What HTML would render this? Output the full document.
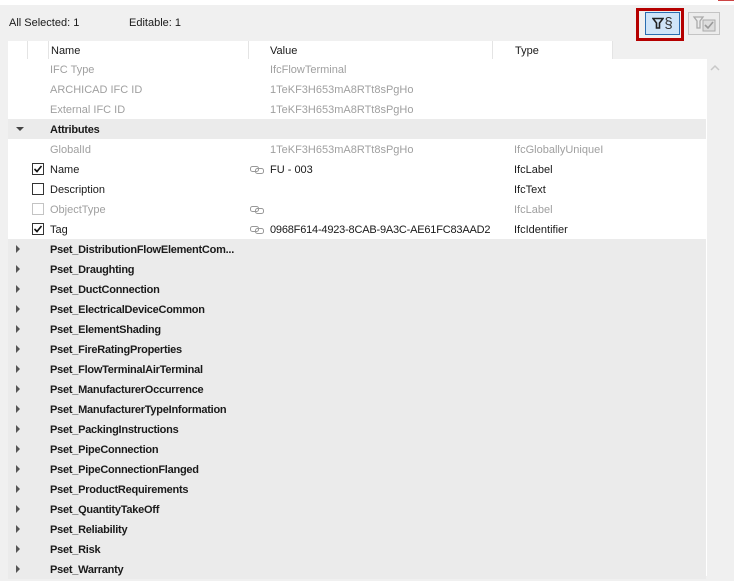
<!DOCTYPE html>
<html><head><style>
*{margin:0;padding:0;box-sizing:border-box}
body{width:734px;height:576px;background:#f0f0f0;font-family:"Liberation Sans",sans-serif;font-size:11px;color:#1a1a1a;position:relative;overflow:hidden}
.topw{position:absolute;left:0;top:0;width:734px;height:5px;background:#fff}
.red{position:absolute;left:718px;top:0;width:16px;height:1px;background:#c44}
.t{position:absolute;white-space:nowrap}
.hdr{position:absolute;left:8px;top:41px;width:604px;height:18px;background:#fff}
.sep{position:absolute;top:41px;width:1px;height:18px;background:#e4e4e4}
.body{position:absolute;left:8px;top:59px;width:698px;height:517px;background:#fff}
.row{position:absolute;left:8px;width:698px;height:20px;line-height:22px}
.g{background:#ebebeb}
.gray{color:#a0a0a0}
.b{font-weight:bold;letter-spacing:-0.25px}
.cb{position:absolute;left:32px;width:12px;height:12px;border:1px solid #333;background:#fff}
.cb.dis{border-color:#c4c4c4}
.tri{position:absolute;left:16px;width:0;height:0}
.right{border-top:4px solid transparent;border-bottom:4px solid transparent;border-left:4px solid #555}
.down{border-left:4px solid transparent;border-right:4px solid transparent;border-top:4px solid #444}
.vl{position:absolute;left:706px;top:59px;width:1px;height:517px;background:#fff}
</style></head><body>
<div class="topw"></div><div class="red"></div>
<div class="t" style="left:9px;top:17px">All Selected: 1</div>
<div class="t" style="left:129px;top:17px">Editable: 1</div>
<div style="position:absolute;left:636px;top:8px;width:48px;height:33px;border:3px solid #b50000"></div>
<div style="position:absolute;left:645px;top:12px;width:35px;height:23px;border:1px solid #2a6db0;background:#cfe4f8;font-size:15px;line-height:21px;text-align:center;color:#333">
<svg width="12" height="12" viewBox="0 0 12 12" style="vertical-align:-1px"><path d="M1 1.5H11L7.5 6V11H4.5V6Z" fill="none" stroke="#222" stroke-width="1.6"/></svg>§</div>
<div style="position:absolute;left:688px;top:12px;width:32px;height:23px;border:1px solid #c4c4c4;background:#ececec">
<svg width="30" height="21" viewBox="0 0 30 21"><path d="M5 4H14L11 8V15H8V8Z" fill="none" stroke="#aaa" stroke-width="1.3"/><rect x="14" y="7" width="12" height="11" fill="#ddd" stroke="#aaa"/><path d="M16 12L19 15L24 9" fill="none" stroke="#999" stroke-width="1.6"/></svg></div>
<div class="hdr"></div>
<div class="sep" style="left:27px"></div><div class="sep" style="left:48px"></div><div class="sep" style="left:248px"></div><div class="sep" style="left:492px"></div><div class="sep" style="left:612px"></div>
<div class="t" style="left:51px;top:45px">Name</div>
<div class="t" style="left:270px;top:45px">Value</div>
<div class="t" style="left:515px;top:45px">Type</div>
<div class="body"></div>
<div class="vl"></div>
<svg style="position:absolute;left:709px;top:64px" width="12" height="8"><path d="M2 6L6 2L10 6" fill="none" stroke="#c8c8c8" stroke-width="1.5"/></svg>

<div class="row gray" style="top:59px"><span class="t" style="left:42px">IFC Type</span><span class="t" style="left:262px">IfcFlowTerminal</span></div>
<div class="row gray" style="top:79px"><span class="t" style="left:42px">ARCHICAD IFC ID</span><span class="t" style="left:262px">1TeKF3H653mA8RTt8sPgHo</span></div>
<div class="row gray" style="top:99px"><span class="t" style="left:42px">External IFC ID</span><span class="t" style="left:262px">1TeKF3H653mA8RTt8sPgHo</span></div>
<div class="row g" style="top:119px"><span class="tri down" style="left:8px;top:8px"></span><span class="t b" style="left:42px">Attributes</span></div>
<div class="row gray" style="top:139px"><span class="t" style="left:42px">GlobalId</span><span class="t" style="left:262px">1TeKF3H653mA8RTt8sPgHo</span><span class="t" style="left:506px">IfcGloballyUniqueI</span></div>

<div class="cb" style="top:163px"><svg width="10" height="10" style="position:absolute;left:0;top:0"><path d="M1.5 5L4 7.5L8.5 2" fill="none" stroke="#111" stroke-width="1.6"/></svg></div>
<div class="t" style="left:50px;top:164px">Name</div>
<div class="t" style="left:270px;top:164px">FU - 003</div>
<div class="t" style="left:514px;top:164px">IfcLabel</div>
<div class="cb" style="top:183px"></div>
<div class="t" style="left:50px;top:184px">Description</div>
<div class="t" style="left:514px;top:184px">IfcText</div>
<div class="cb dis" style="top:203px"></div>
<div class="t gray" style="left:50px;top:204px">ObjectType</div>
<div class="t gray" style="left:514px;top:204px">IfcLabel</div>
<div class="cb" style="top:223px"><svg width="10" height="10" style="position:absolute;left:0;top:0"><path d="M1.5 5L4 7.5L8.5 2" fill="none" stroke="#111" stroke-width="1.6"/></svg></div>
<div class="t" style="left:50px;top:224px">Tag</div>
<div class="t" style="left:270px;top:224px;letter-spacing:-0.2px">0968F614-4923-8CAB-9A3C-AE61FC83AAD2</div>
<div class="t" style="left:514px;top:224px">IfcIdentifier</div>
<svg style="position:absolute;left:250px;top:166px" width="16" height="70"><g fill="none" stroke="#999" stroke-width="1"><g id="l"><rect x="0.5" y="0.5" width="8" height="5" rx="2"/><rect x="5.5" y="2.5" width="8" height="5" rx="2"/></g><use href="#l" y="40"/><use href="#l" y="60"/></g></svg>

<div class="row g" style="top:239px"><span class="tri right" style="left:8px;top:6px"></span><span class="t b" style="left:42px">Pset_DistributionFlowElementCom...</span></div>
<div class="row g" style="top:259px"><span class="tri right" style="left:8px;top:6px"></span><span class="t b" style="left:42px">Pset_Draughting</span></div>
<div class="row g" style="top:279px"><span class="tri right" style="left:8px;top:6px"></span><span class="t b" style="left:42px">Pset_DuctConnection</span></div>
<div class="row g" style="top:299px"><span class="tri right" style="left:8px;top:6px"></span><span class="t b" style="left:42px">Pset_ElectricalDeviceCommon</span></div>
<div class="row g" style="top:319px"><span class="tri right" style="left:8px;top:6px"></span><span class="t b" style="left:42px">Pset_ElementShading</span></div>
<div class="row g" style="top:339px"><span class="tri right" style="left:8px;top:6px"></span><span class="t b" style="left:42px">Pset_FireRatingProperties</span></div>
<div class="row g" style="top:359px"><span class="tri right" style="left:8px;top:6px"></span><span class="t b" style="left:42px">Pset_FlowTerminalAirTerminal</span></div>
<div class="row g" style="top:379px"><span class="tri right" style="left:8px;top:6px"></span><span class="t b" style="left:42px">Pset_ManufacturerOccurrence</span></div>
<div class="row g" style="top:399px"><span class="tri right" style="left:8px;top:6px"></span><span class="t b" style="left:42px">Pset_ManufacturerTypeInformation</span></div>
<div class="row g" style="top:419px"><span class="tri right" style="left:8px;top:6px"></span><span class="t b" style="left:42px">Pset_PackingInstructions</span></div>
<div class="row g" style="top:439px"><span class="tri right" style="left:8px;top:6px"></span><span class="t b" style="left:42px">Pset_PipeConnection</span></div>
<div class="row g" style="top:459px"><span class="tri right" style="left:8px;top:6px"></span><span class="t b" style="left:42px">Pset_PipeConnectionFlanged</span></div>
<div class="row g" style="top:479px"><span class="tri right" style="left:8px;top:6px"></span><span class="t b" style="left:42px">Pset_ProductRequirements</span></div>
<div class="row g" style="top:499px"><span class="tri right" style="left:8px;top:6px"></span><span class="t b" style="left:42px">Pset_QuantityTakeOff</span></div>
<div class="row g" style="top:519px"><span class="tri right" style="left:8px;top:6px"></span><span class="t b" style="left:42px">Pset_Reliability</span></div>
<div class="row g" style="top:539px"><span class="tri right" style="left:8px;top:6px"></span><span class="t b" style="left:42px">Pset_Risk</span></div>
<div class="row g" style="top:559px"><span class="tri right" style="left:8px;top:6px"></span><span class="t b" style="left:42px">Pset_Warranty</span></div>
</body></html>
